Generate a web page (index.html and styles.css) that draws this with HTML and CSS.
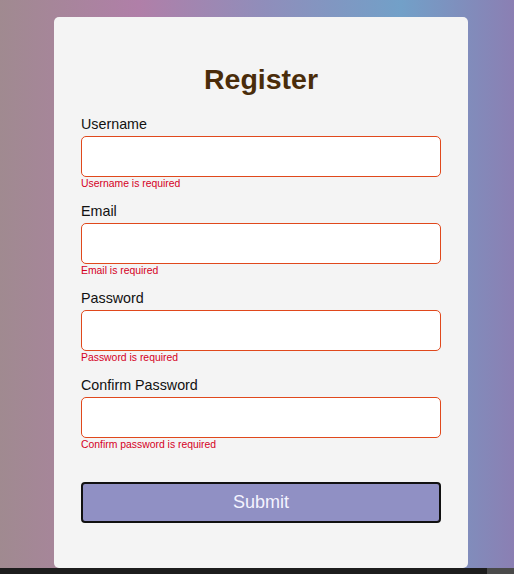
FILE: index.html
```html
<!DOCTYPE html>
<html>
<head>
<meta charset="utf-8">
<link rel="stylesheet" href="styles.css">
</head>
<body>
<div class="page">
  <form class="card">
    <h2 class="title">Register</h2>
    <div class="field">
      <label class="label">Username</label>
      <input class="input" type="text">
      <div class="error">Username is required</div>
    </div>
    <div class="field">
      <label class="label">Email</label>
      <input class="input" type="text">
      <div class="error">Email is required</div>
    </div>
    <div class="field">
      <label class="label">Password</label>
      <input class="input" type="password">
      <div class="error">Password is required</div>
    </div>
    <div class="field">
      <label class="label">Confirm Password</label>
      <input class="input" type="password">
      <div class="error">Confirm password is required</div>
    </div>
    <button class="submit" type="button">Submit</button>
  </form>
</div>
<div class="bottombar"><div class="thumb"></div></div>
</body>
</html>
```
FILE: styles.css
```css
html, body {
  margin: 0;
  padding: 0;
}
body {
  width: 514px;
  height: 574px;
  overflow: hidden;
  font-family: "Liberation Sans", Arial, sans-serif;
  background: linear-gradient(90deg, #a08a90 0%, #b07fa8 27%, #8f8ebb 52%, #72a0c8 78%, #8b7fb3 100%);
}
.page {
  height: 568px;
  display: flex;
  justify-content: center;
  padding-top: 17px;
  padding-left: 8px;
  box-sizing: border-box;
}
.card {
  width: 414px;
  height: 551px;
  box-sizing: border-box;
  background: #f4f4f4;
  border-radius: 5px;
  padding: 46px 27px 0 27px;
  display: flex;
  flex-direction: column;
}
.title {
  margin: 0 0 21px 0;
  text-align: center;
  font-size: 28.5px;
  line-height: 32px;
  font-weight: bold;
  color: #4a2c0a;
}
.field {
  display: flex;
  flex-direction: column;
  margin-bottom: 13px;
}
.label {
  font-size: 14.3px;
  line-height: 17px;
  color: #111;
  margin-bottom: 3px;
}
.input {
  height: 41px;
  box-sizing: border-box;
  border: 1px solid #e0481c;
  border-radius: 5px;
  background: #fff;
  margin: 0;
  padding: 0 8px;
  outline: none;
}
.error {
  margin-top: 0;
  font-size: 10.4px;
  line-height: 13px;
  color: #d4001e;
}
.submit {
  margin-top: 18px;
  height: 41px;
  box-sizing: border-box;
  background: #9090c4;
  border: 2px solid #111;
  border-radius: 4px;
  color: #f4f4ff;
  font-family: "Liberation Sans", Arial, sans-serif;
  font-size: 18px;
  padding: 0;
}
.bottombar {
  height: 6px;
  background: #1d1d1d;
  display: flex;
  justify-content: flex-end;
}
.thumb {
  width: 27px;
  background: #4a4a4a;
}
```
